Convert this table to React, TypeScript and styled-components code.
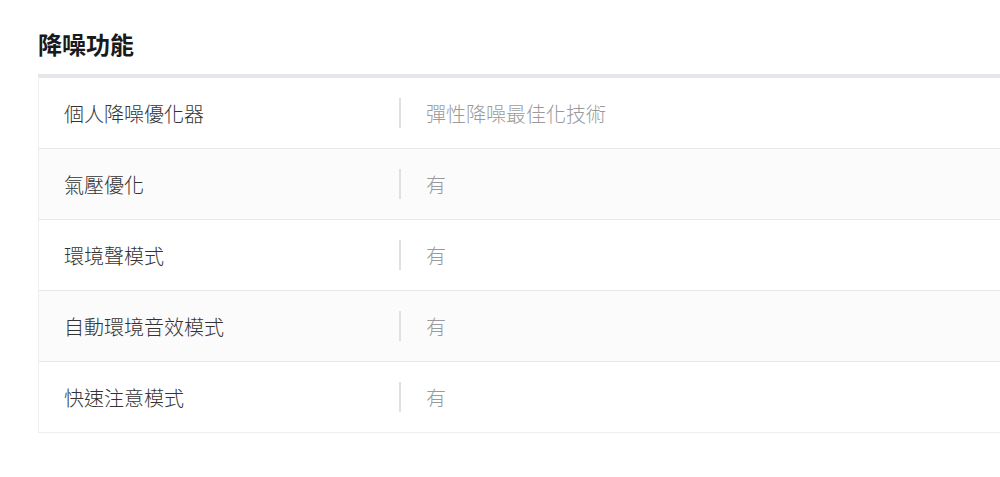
import styled, { createGlobalStyle } from 'styled-components';

const GlobalStyle = createGlobalStyle`
  body {
    margin: 0;
    background: #ffffff;
    font-family: 'Noto Sans CJK TC', 'Noto Sans', sans-serif;
  }
`;

const Page = styled.section`
  padding: 28px 0 0 38px;
`;

const Title = styled.h2`
  margin: 0 0 14px;
  font-size: 24px;
  line-height: 32px;
  font-weight: 700;
  color: #1a1a1a;
`;

const Table = styled.div`
  border-top: 4px solid #e5e5ea;
  border-left: 1px solid #eeeeee;
  border-bottom: 1px solid #eeeeee;
`;

const Row = styled.div<{ shaded: boolean }>`
  display: flex;
  align-items: center;
  height: 70px;
  background: ${(props) => (props.shaded ? '#fbfbfb' : '#ffffff')};

  & + & {
    border-top: 1px solid #e8e8e8;
  }
`;

const Label = styled.div`
  width: 360px;
  padding-left: 25px;
  box-sizing: border-box;
  font-size: 20px;
  font-weight: 300;
  color: #333333;
`;

const Divider = styled.span`
  width: 2px;
  height: 30px;
  background: #e0e0e0;
`;

const Value = styled.div`
  padding-left: 25px;
  font-size: 20px;
  font-weight: 300;
  color: #9a9a9a;
`;

const specs = [
  { label: '個人降噪優化器', value: '彈性降噪最佳化技術' },
  { label: '氣壓優化', value: '有' },
  { label: '環境聲模式', value: '有' },
  { label: '自動環境音效模式', value: '有' },
  { label: '快速注意模式', value: '有' },
];

const App = (): JSX.Element => (
  <>
    <GlobalStyle />
    <Page>
      <Title>降噪功能</Title>
      <Table>
        {specs.map((spec, i) => (
          <Row key={spec.label} shaded={i % 2 === 1}>
            <Label>{spec.label}</Label>
            <Divider />
            <Value>{spec.value}</Value>
          </Row>
        ))}
      </Table>
    </Page>
  </>
);

export default App;
